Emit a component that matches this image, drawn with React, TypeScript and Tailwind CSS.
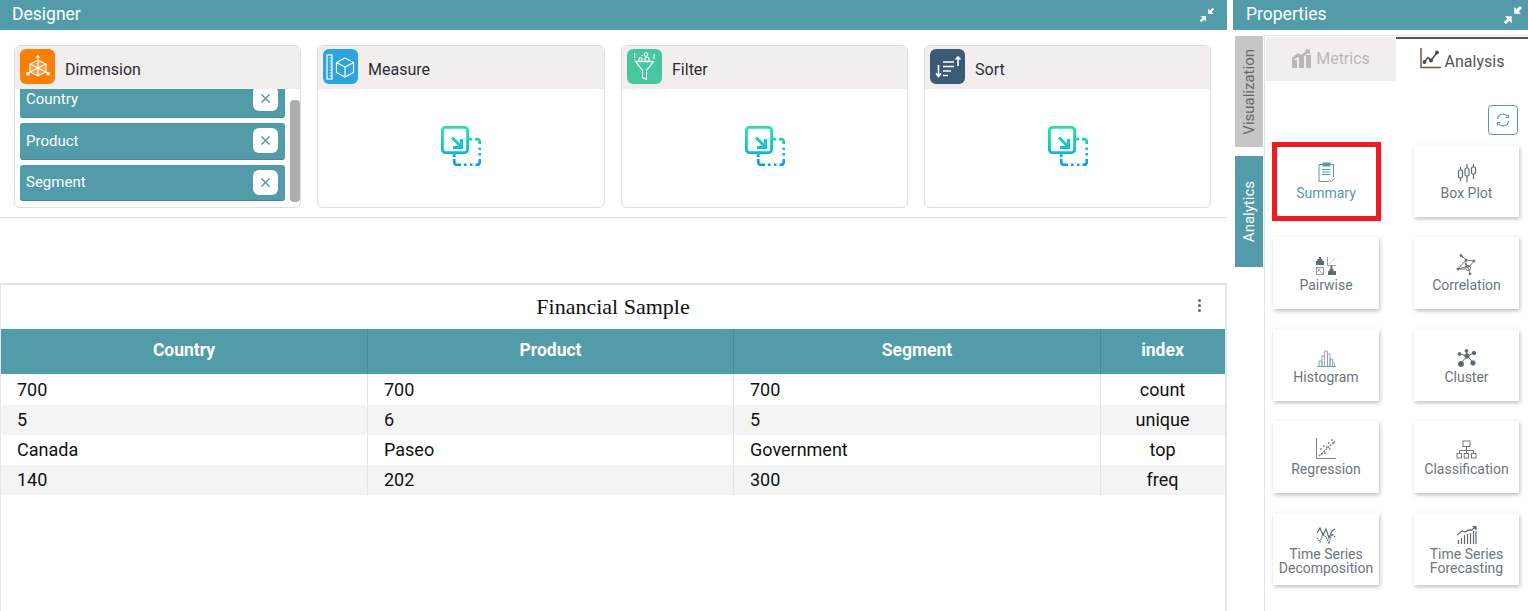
import { useId, type ReactNode } from "react"

const roboto = "font-['Roboto',sans-serif]"

function CollapseIcon({ size }: { size: number }) {
  return (
    <svg width={size} height={size} viewBox="0 0 16 16" fill="white">
      <path d="M9 7V1.500l1.900 1.900L13.600.7l1.700 1.700-2.700 2.700L14.500 7z" />
      <path d="M7 9v5.500l-1.900-1.900-2.700 2.700-1.700-1.700 2.700-2.700L1.500 9z" />
    </svg>
  )
}

function DropIcon() {
  const id = useId()
  return (
    <svg width="40" height="40" viewBox="0 0 40 40" fill="none">
      <defs>
        <linearGradient id={id} x1="0" y1="0" x2="0" y2="40" gradientUnits="userSpaceOnUse">
          <stop offset="0" stopColor="#1de9a4" />
          <stop offset="1" stopColor="#0a9cf5" />
        </linearGradient>
      </defs>
      <rect x="1.400" y="1.400" width="25.200" height="25.200" rx="3" stroke={`url(#${id})`} strokeWidth="2.800" />
      <path d="M11 11.500l9 9M20.500 13v8.500H12" stroke={`url(#${id})`} strokeWidth="3" />
      <path
        d="M28 13.200h3M34 13.200h2a2.800 2.800 0 0 1 2.800 2.800v2M38.800 21.500V24M38.800 27v2.500M38.800 33v3a2.800 2.800 0 0 1-2.800 2.800h-1.500M31.500 38.800H29M25.500 38.800H23M20 38.800h-4a2.800 2.800 0 0 1-2.800-2.800v-3M13.200 28v3"
        stroke={`url(#${id})`}
        strokeWidth="2.800"
      />
    </svg>
  )
}

function DimensionGlyph() {
  return (
    <svg width="24" height="24" viewBox="0 0 24 24" fill="none" stroke="white" strokeWidth="1.100">
      <path d="M12 5l8 4v8l-8 4-8-4V9z" fill="white" fillOpacity="0.25" />
      <path d="M4 9l8 4 8-4M12 13v8M4 17l8-4 8 4M12 5v8M12 1v4" />
      <path d="M10 3l2-2.200L14 3" />
      <path d="M4 17l-3 2M20 17l3 2" />
      <circle cx="1.800" cy="18.800" r="1.300" fill="white" />
      <circle cx="22.200" cy="18.800" r="1.300" fill="white" />
    </svg>
  )
}

function MeasureGlyph() {
  return (
    <svg width="30" height="28" viewBox="0 0 30 28" fill="none" stroke="white" strokeWidth="1.200">
      <rect x="1" y="2" width="5" height="24" />
      <path d="M3.500 5H6M3.500 8H6M3.500 11H6M3.500 14H6M3.500 17H6M3.500 20H6M3.500 23H6" strokeWidth="0.800" />
      <path d="M19 5l8.500 4.500v10L19 24l-8.500-4.500v-10z" />
      <path d="M10.500 9.500L19 14l8.500-4.500M19 14v10" />
    </svg>
  )
}

function FilterGlyph() {
  return (
    <svg width="21" height="29" viewBox="0 0 21 29" fill="none" stroke="white" strokeWidth="1.100">
      <path d="M1.500 9.500h18l-7 9v9l-4-2v-7z" />
      <path d="M2 9.500h17" strokeWidth="1.700" />
      <path d="M.7 1v5M.7 7.500v1M8 3v1M20 2v5" />
      <circle cx="12" cy="2.500" r="1.800" />
      <circle cx="6.500" cy="7.500" r="1.700" />
      <circle cx="13" cy="7.500" r="2.200" />
    </svg>
  )
}

function SortGlyph() {
  return (
    <svg width="26" height="22" viewBox="0 0 26 22" fill="none" stroke="white" strokeWidth="1.600">
      <path d="M3.500 9v11M1 17.500l2.500 3 2.500-3" />
      <path d="M8 6h11M8 10.500h11M8 15h8M8 19.500h5" />
      <path d="M23 10V1M20.500 3.500L23 1l2.500 2.500" />
    </svg>
  )
}

function SummaryGlyph() {
  return (
    <svg width="17" height="21" viewBox="0 0 17 21" fill="none" stroke="#519ca8" strokeWidth="1">
      <path d="M5 2.500H1v17h10M12 2.500h3.500V15" />
      <rect x="5" y="1" width="7" height="3" fill="#519ca8" />
      <path d="M4 7.500h8.500M4 10h8.500M4 12.500h8.500" />
      <path d="M11.500 18l1.700 1.500 3-3" />
    </svg>
  )
}

function BoxPlotGlyph() {
  return (
    <svg width="20" height="20" viewBox="0 0 20 20" fill="none" stroke="#5c6b73" strokeWidth="1.200">
      <path d="M3.500 4v3M3.500 15v3M10 1v4M10 13v6M16.500 1v3M16.500 11v5" />
      <rect x="1.500" y="7" width="4" height="8" rx="1.500" />
      <rect x="8" y="5" width="4" height="8" rx="1.500" />
      <rect x="14.500" y="4" width="4" height="7" rx="1.500" />
    </svg>
  )
}

function PairwiseGlyph() {
  return (
    <svg width="20" height="18" viewBox="0 0 20 18" fill="none" strokeWidth="0.900">
      <path d="M0 8V4h1.500V2H3V0h2v2h1.500v2H8v4z" fill="#5c6b73" />
      <path d="M11.500 0v8.500H20" stroke="#8a9499" />
      <path d="M13 7l6-6" stroke="#b7a48c" strokeDasharray="1 1" />
      <rect x=".5" y="10.500" width="7" height="7" stroke="#8a9499" />
      <path d="M1 11l6 6M1.500 15l3-4" stroke="#c08a6a" />
      <path d="M12 18v-4h1.500v-2h1V9h2v3h1v2H20v4z" fill="#5c6b73" />
    </svg>
  )
}

function CorrelationGlyph() {
  return (
    <svg width="21" height="21" viewBox="0 0 21 21" fill="none" stroke="#5c6b73" strokeWidth="0.900">
      <path d="M5 1l5 5 8 1-5 6-4-4 4 7 1 4M10 6l-8 9 7-2h4M5 1l2 3M10 6v7M2 15l7 0" />
      <circle cx="12" cy="14" r="2.500" />
      <circle cx="5" cy="1.500" r="1" fill="#5c6b73" />
      <circle cx="18" cy="7" r="1" fill="#5c6b73" />
      <circle cx="2" cy="15" r="1" fill="#5c6b73" />
      <circle cx="14" cy="20" r="1" fill="#5c6b73" />
      <circle cx="10" cy="6" r="1" fill="#5c6b73" />
    </svg>
  )
}

function HistogramGlyph() {
  return (
    <svg width="19" height="17" viewBox="0 0 19 17" fill="none" strokeWidth="1">
      <path d="M0 16.500h19" stroke="#6f9fc4" />
      <path d="M2 16v-5h3v5" stroke="#6fb0c6" />
      <path d="M5 16V6h2.500v10" stroke="#9898c4" />
      <path d="M7.500 16V1h3v15" stroke="#c49898" />
      <path d="M10.500 16V4h2.500v12" stroke="#9898c4" />
      <path d="M13 16V9h2.500v7" stroke="#6fb0c6" />
      <path d="M15.500 16v-3h2v3" stroke="#8fbc9e" />
    </svg>
  )
}

function ClusterGlyph() {
  return (
    <svg width="20" height="18" viewBox="0 0 20 18" fill="#5c6b73" stroke="#5c6b73" strokeWidth="1">
      <path d="M10 7L9.500 2M10 7l7-3M10 7L3.500 5M10 7l-6 7M10 7l6 6" />
      <circle cx="10" cy="7" r="2.200" />
      <circle cx="9.500" cy="2" r="1.400" />
      <circle cx="17" cy="4" r="1.700" />
      <circle cx="2.500" cy="5" r="1.500" />
      <circle cx="4" cy="15" r="2.500" />
      <circle cx="16" cy="14" r="2.200" />
    </svg>
  )
}

function RegressionGlyph() {
  return (
    <svg width="20" height="21" viewBox="0 0 20 21" fill="none" stroke="#6b7780" strokeWidth="0.900">
      <path d="M.5 0v20.500H20" />
      <path d="M3 18L19 3" strokeDasharray="2 1" strokeWidth="1.300" />
      <path d="M4 11h1.500M7 8h1.500M8 15h1.500M12 5h1.500M13 11h1.500M15 2h1.500M17 5h1.500M10 9h1.500M5 16h1.500" strokeWidth="1.300" />
    </svg>
  )
}

function ClassificationGlyph() {
  return (
    <svg width="21" height="19" viewBox="0 0 21 19" fill="none" stroke="#5c6b73" strokeWidth="0.900">
      <rect x="7" y="1" width="7" height="5.500" />
      <path d="M10.500 6.500v4M3.500 13v-2.500h14V13M10.500 10.500V13" />
      <rect x="1" y="13.500" width="4.500" height="4.500" />
      <rect x="8.200" y="13.500" width="4.500" height="4.500" />
      <rect x="15.500" y="13.500" width="4.500" height="4.500" />
    </svg>
  )
}

function DecompositionGlyph() {
  return (
    <svg width="20" height="17" viewBox="0 0 20 17" fill="none" stroke="#5c6b73" strokeWidth="1.200">
      <path d="M1 6l3-5 3 7 3-6 3 9 3-7 3-2" />
      <path d="M1 11l3 4 3-8 3 3 3 6 3-9 3 3" strokeDasharray="1.500 0.800" />
    </svg>
  )
}

function ForecastGlyph() {
  return (
    <svg width="20" height="18" viewBox="0 0 20 18" fill="none" stroke="#5c6b73" strokeWidth="1.200">
      <path d="M1.500 18v-4M4.500 18v-6M7.500 18V9M10.500 18V8M13.500 18V7M16.500 18V5M19 18V5" />
      <path d="M0 9l5-4 3 1 4-2 3 0 3-3" strokeWidth="1.300" />
      <path d="M15.500.500H19V4" fill="#5c6b73" />
    </svg>
  )
}

function MetricsGlyph() {
  return (
    <svg className="-mt-0.5" width="19" height="20" viewBox="0 0 19 20" fill="#b8b8b8">
      <rect x="0" y="12" width="5" height="8" />
      <rect x="7" y="9" width="5" height="11" />
      <rect x="14" y="7" width="5" height="13" />
      <path d="M0 10l6-5 3 2 5-4-1.500-1.500H18V6.500L16 5l-7 6-3-2-6 4z" />
    </svg>
  )
}

function AnalysisGlyph() {
  return (
    <svg className="-mt-1" width="21" height="21" viewBox="0 0 21 21" fill="none" stroke="#4c4c4c" strokeWidth="1.500">
      <path d="M1 0v19.500h20" stroke="#6b5a4a" />
      <path d="M4 14.500l4-5 3 3 6-8" />
      <circle cx="4.500" cy="14" r="1.200" fill="#4c4c4c" />
      <circle cx="11" cy="12.500" r="1.200" fill="#4c4c4c" />
      <circle cx="17" cy="4.500" r="1.200" fill="#4c4c4c" />
    </svg>
  )
}

function RefreshGlyph() {
  return (
    <svg width="14" height="14" viewBox="0 0 14 14" fill="none" stroke="#519ca8" strokeWidth="1.200">
      <path d="M1.500 6a5.500 5.500 0 0 1 10-2.500M12.500 8a5.500 5.500 0 0 1-10 2.500" />
      <path d="M12.500 1.500v3h-3M1.500 12.500v-3h3" />
    </svg>
  )
}

function PanelHeader({ title, icon, className }: { title: string; icon: ReactNode; className: string }) {
  return (
    <div className={`flex h-[30px] shrink-0 items-center justify-between bg-[#519ca8] text-white ${className}`}>
      <span className="text-[17.5px] leading-none">{title}</span>
      {icon}
    </div>
  )
}

function DropCard({ title, color, icon, children }: { title: string; color: string; icon: ReactNode; children?: ReactNode }) {
  return (
    <div className="flex h-[163px] flex-col overflow-hidden rounded-md border border-[#dedede] bg-white">
      <div className="flex h-[43px] shrink-0 items-center bg-[#f2eeed] pl-[5px]">
        <div className={`mt-[3px] flex h-[35px] w-[35px] shrink-0 items-center justify-center self-start rounded-md ${color}`}>{icon}</div>
        <span className="ml-[10px] mt-[5px] text-base text-[#2d2d38]">{title}</span>
      </div>
      {children ?? (
        <div className="flex flex-1 items-center justify-center pb-1">
          <DropIcon />
        </div>
      )}
    </div>
  )
}

function FieldChip({ label, className }: { label: string; className: string }) {
  return (
    <div className={`flex shrink-0 items-center justify-between rounded-[3px] border-b border-[#458794] bg-[#519ca8] pl-[6px] pr-[7px] text-[15px] text-white ${className}`}>
      <span>{label}</span>
      <span className="-mt-px flex h-[25px] w-[25px] items-center justify-center rounded-md bg-white">
        <svg width="9" height="9" viewBox="0 0 9 9" stroke="#519ca8" strokeWidth="1.500">
          <path d="M.5.500l8 8M8.500.500l-8 8" />
        </svg>
      </span>
    </div>
  )
}

const analysisTools: { label: ReactNode; icon: ReactNode; active?: boolean }[] = [
  { label: "Summary", icon: <SummaryGlyph />, active: true },
  { label: "Box Plot", icon: <BoxPlotGlyph /> },
  { label: "Pairwise", icon: <PairwiseGlyph /> },
  { label: "Correlation", icon: <CorrelationGlyph /> },
  { label: "Histogram", icon: <HistogramGlyph /> },
  { label: "Cluster", icon: <ClusterGlyph /> },
  { label: "Regression", icon: <RegressionGlyph /> },
  { label: "Classification", icon: <ClassificationGlyph /> },
  { label: <>Time Series<br />Decomposition</>, icon: <DecompositionGlyph /> },
  { label: <>Time Series<br />Forecasting</>, icon: <ForecastGlyph /> },
]

const tableRows = [
  ["700", "700", "700", "count"],
  ["5", "6", "5", "unique"],
  ["Canada", "Paseo", "Government", "top"],
  ["140", "202", "300", "freq"],
]

const tableCols = "grid grid-cols-[367px_366px_367px_123px]"

export default function App() {
  return (
    <div className={`flex h-[611px] w-[1528px] overflow-hidden bg-white ${roboto}`}>
      {/* Designer column */}
      <div className="flex w-[1227px] shrink-0 flex-col">
        <PanelHeader title="Designer" icon={<CollapseIcon size={16} />} className="pl-3 pr-3" />
        <div className="grid h-[188px] shrink-0 grid-cols-[287px_288px_287px_287px] gap-x-4 border-b border-[#dedede] px-[14px] pt-[15px]">
          <DropCard title="Dimension" color="bg-[#fb7f05]" icon={<DimensionGlyph />}>
            <div className="relative flex-1 overflow-hidden">
              <div className="-mt-2 flex w-[270px] flex-col gap-[5px] pl-[5px]">
                <FieldChip label="Country" className="h-[37px]" />
                <FieldChip label="Product" className="h-[37px]" />
                <FieldChip label="Segment" className="h-[36px]" />
              </div>
              <div className="absolute right-0 top-[11px] h-[102px] w-[10px] rounded-sm bg-[#aeaeae]" />
            </div>
          </DropCard>
          <DropCard title="Measure" color="bg-[#2ba4df]" icon={<MeasureGlyph />} />
          <DropCard title="Filter" color="bg-[#47c6a0]" icon={<FilterGlyph />} />
          <DropCard title="Sort" color="bg-[#3a5a75]" icon={<SortGlyph />} />
        </div>

        {/* Chart area */}
        <div className="mt-[65px] flex flex-1 flex-col border-t-2 border-r-2 border-l border-[#e6e6e6]">
          <div className="relative flex h-[44px] items-center justify-center text-[#111]">
            <span className="-mt-0.5 font-['Liberation_Serif',serif] text-[22px]">Financial Sample</span>
            <div className="absolute right-[24px] top-[14px] flex flex-col gap-[2px]">
              <i className="h-[3px] w-[3px] rounded-full bg-[#666]" />
              <i className="h-[3px] w-[3px] rounded-full bg-[#666]" />
              <i className="h-[3px] w-[3px] rounded-full bg-[#666]" />
            </div>
          </div>
          <div className={`${tableCols} h-[45px] bg-[#519ca8] text-white`}>
            {["Country", "Product", "Segment", "index"].map((h) => (
              <div key={h} className="flex items-center justify-center border-r border-[#478b96] pb-0.5 text-[17.5px] font-bold last:border-r-0">
                {h}
              </div>
            ))}
          </div>
          {tableRows.map((row, i) => (
            <div key={i} className={`${tableCols} ${i === 0 ? "h-[31px]" : "h-[30px]"} ${i % 2 === 1 ? "bg-[#f4f4f4]" : "bg-white"} text-lg text-[#111]`}>
              {row.map((cell, j) => (
                <div key={j} className={`flex items-center border-r border-[#e4e4e4] last:border-r-0 ${j === 3 ? "justify-center" : "pl-4"}`}>
                  {cell}
                </div>
              ))}
            </div>
          ))}
        </div>
      </div>

      {/* Properties column */}
      <div className="ml-[6px] flex min-w-0 flex-1 flex-col">
        <PanelHeader title="Properties" icon={<CollapseIcon size={20} />} className="pl-[13px] pr-[5px]" />
        <div className="flex flex-1 pt-[5px]">
          <div className="flex w-[31px] shrink-0 flex-col gap-[9px] pl-[2px] pt-px">
            <div className="flex h-[111px] w-[28px] items-center justify-center bg-[#c6c6c6] text-[#666] [writing-mode:vertical-rl]">
              <span className="rotate-180 text-[15px]">Visualization</span>
            </div>
            <div className="flex h-[111px] w-[28px] items-center justify-center bg-[#519ca8] text-white [writing-mode:vertical-rl]">
              <span className="rotate-180 text-[15px]">Analytics</span>
            </div>
          </div>
          <div className="flex-1 border-t border-l border-[#dfe3ea] pl-px pt-px">
            <div className="flex h-[44px]">
              <div className="flex w-[130px] items-center justify-center gap-[5px] bg-[#f2eeed] text-base text-[#b8b8b8]">
                <MetricsGlyph />
                <span>Metrics</span>
              </div>
              <div className="flex flex-1 items-center justify-center gap-1 border-t-2 border-[#555] text-base text-[#555]">
                <AnalysisGlyph />
                <span className="mt-1">Analysis</span>
              </div>
            </div>
            <div className="flex justify-end pr-[10px] pt-6">
              <div className="flex h-[30px] w-[30px] items-center justify-center rounded border border-[#519ca8]">
                <RefreshGlyph />
              </div>
            </div>
            <div className="mt-[10px] grid grid-cols-[106px_105px] gap-x-[35px] gap-y-5 pl-[7px]">
              {analysisTools.map((tool, i) => (
                <div
                  key={i}
                  className={`relative flex h-[72px] flex-col items-center justify-center bg-white pb-px text-center text-sm leading-[14px] shadow-[1px_2px_4px_rgba(0,0,0,0.25)] ${tool.active ? "text-[#519ca8]" : "text-[#6a7680]"}`}
                >
                  <div className="flex h-[22px] items-end">{tool.icon}</div>
                  <div className="mt-[3px]">{tool.label}</div>
                  {tool.active && <div className="absolute -top-[3px] -right-0.5 -bottom-1 -left-px border-[5px] border-[#ed1c24]" />}
                </div>
              ))}
            </div>
          </div>
        </div>
      </div>
    </div>
  )
}
